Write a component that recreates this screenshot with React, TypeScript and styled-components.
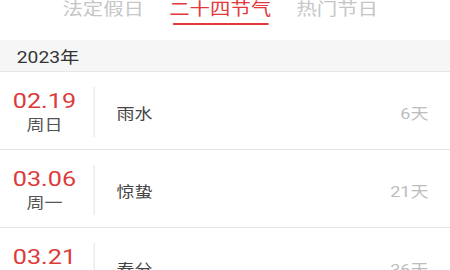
import React from "react";
import styled, { createGlobalStyle } from "styled-components";

const Global = createGlobalStyle`
  html, body { margin: 0; padding: 0; background: #fff; overflow: hidden; }
  body { font-family: Roboto, "Noto Sans CJK SC", sans-serif; }
`;

/* The reference was a 375px-wide screen stretched horizontally to 450px. */
const Stage = styled.div`
  width: 375px;
  transform: scaleX(1.2);
  transform-origin: 0 0;
  background: #fff;
`;

const TabBar = styled.div`
  display: flex;
  align-items: flex-start;
  gap: 21px;
  height: 40px;
  padding-left: 52px;
  box-sizing: border-box;
`;

const Tab = styled.div<{ $active?: boolean }>`
  display: flex;
  flex-direction: column;
  align-items: center;
  font-size: 17px;
  line-height: 19px;
  color: ${(p) => (p.$active ? "#e4393c" : "#c6c6c6")};
`;

const Underline = styled.div`
  width: 80px;
  height: 2px;
  margin-top: 4px;
  border-radius: 1px;
  background: #e4393c;
`;

const YearHeader = styled.div`
  height: 30px;
  display: flex;
  align-items: center;
  padding-left: 14px;
  padding-top: 1px;
  background: #f6f6f6;
  border-bottom: 1px solid #e6e6e6;
  font-size: 16px;
  color: #333;
`;

const Row = styled.div`
  display: flex;
  align-items: center;
  height: 77px;
  border-bottom: 1px solid #e4e4e4;
  padding-right: 18px;
`;

const DateCol = styled.div`
  width: 74px;
  display: flex;
  flex-direction: column;
  align-items: center;
  padding-top: 3px;
`;

const DateText = styled.div`
  font-size: 21px;
  line-height: 26px;
  color: #dc3b3b;
`;

const Weekday = styled.div`
  font-size: 15px;
  line-height: 22px;
  color: #555;
`;

const Divider = styled.div`
  width: 1px;
  height: 50px;
  margin-left: 4px;
  margin-top: 2px;
  background: #e8e8e8;
`;

const Name = styled.div`
  flex: 1;
  margin-left: 18px;
  padding-top: 4px;
  font-size: 15px;
  color: #444;
`;

const Days = styled.div`
  padding-top: 4px;
  font-size: 15px;
  color: #bdbdbd;
`;

const items = [
  { date: "02.19", week: "周日", name: "雨水", days: "6天" },
  { date: "03.06", week: "周一", name: "惊蛰", days: "21天" },
  { date: "03.21", week: "周二", name: "春分", days: "36天" },
];

export default function App() {
  return (
    <>
      <Global />
      <Stage>
        <TabBar>
          <Tab>法定假日</Tab>
          <Tab $active>
            二十四节气
            <Underline />
          </Tab>
          <Tab>热门节日</Tab>
        </TabBar>
        <YearHeader>2023年</YearHeader>
        {items.map((it) => (
          <Row key={it.date}>
            <DateCol>
              <DateText>{it.date}</DateText>
              <Weekday>{it.week}</Weekday>
            </DateCol>
            <Divider />
            <Name>{it.name}</Name>
            <Days>{it.days}</Days>
          </Row>
        ))}
      </Stage>
    </>
  );
}
